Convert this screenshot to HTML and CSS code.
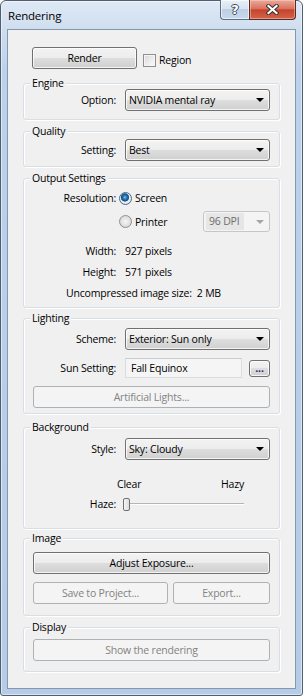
FILE: index.html
```html
<!DOCTYPE html>
<html lang="en">
<head>
  <meta charset="UTF-8" />
  <title>Rendering</title>
  <link rel="stylesheet" href="styles.css">
</head>
<body>
  <div class="window">
    <div class="titlebar">
      <span class="title">Rendering</span>
      <div class="caption">
        <span class="cap-btn cap-help">?</span>
        <span class="cap-btn cap-close">
          <svg width="13" height="11" viewBox="0 0 13 11">
            <path d="M2.5 2 L10.5 9 M10.5 2 L2.5 9" stroke="#3a3030" stroke-width="4.2" stroke-linecap="square" fill="none"/>
            <path d="M2.5 2 L10.5 9 M10.5 2 L2.5 9" stroke="#ffffff" stroke-width="2.2" stroke-linecap="square" fill="none"/>
          </svg>
        </span>
      </div>
    </div>

    <div class="client">
      <div class="render-row">
        <button class="btn btn-render">Render</button>
        <label class="check"><span class="checkbox"></span>Region</label>
      </div>

      <fieldset class="group group-engine">
        <legend>Engine</legend>
        <div class="row">
          <span class="lbl">Option:</span>
          <div class="combo">NVIDIA mental ray<span class="arrow"></span></div>
        </div>
      </fieldset>

      <fieldset class="group group-quality">
        <legend>Quality</legend>
        <div class="row">
          <span class="lbl">Setting:</span>
          <div class="combo">Best<span class="arrow"></span></div>
        </div>
      </fieldset>

      <fieldset class="group group-output">
        <legend>Output Settings</legend>
        <div class="row row-res">
          <span class="lbl">Resolution:</span>
          <span class="radio radio-on"></span>
          <span class="radio-text">Screen</span>
        </div>
        <div class="row row-printer">
          <span class="lbl"></span>
          <span class="radio"></span>
          <span class="radio-text">Printer</span>
          <div class="combo combo-disabled"><span class="sel-text">96 DPI</span><span class="arrow"></span></div>
        </div>
        <div class="info">
          <div class="row info-row"><span class="lbl">Width:</span><span class="val">927 pixels</span></div>
          <div class="row info-row"><span class="lbl">Height:</span><span class="val">571 pixels</span></div>
          <div class="row info-row info-size">Uncompressed image size:<span class="size-val">2 MB</span></div>
        </div>
      </fieldset>

      <fieldset class="group group-lighting">
        <legend>Lighting</legend>
        <div class="row row-scheme">
          <span class="lbl">Scheme:</span>
          <div class="combo">Exterior: Sun only<span class="arrow"></span></div>
        </div>
        <div class="row row-sun">
          <span class="lbl">Sun Setting:</span>
          <div class="textbox">Fall Equinox</div>
          <button class="btn btn-dots">...</button>
        </div>
        <button class="btn btn-wide btn-artificial" disabled>Artificial Lights...</button>
      </fieldset>

      <fieldset class="group group-background">
        <legend>Background</legend>
        <div class="row row-style">
          <span class="lbl">Style:</span>
          <div class="combo">Sky: Cloudy<span class="arrow"></span></div>
        </div>
        <div class="row row-ends">
          <span class="lbl"></span>
          <div class="ends"><span>Clear</span><span>Hazy</span></div>
        </div>
        <div class="row row-haze">
          <span class="lbl">Haze:</span>
          <div class="slider"><span class="thumb"></span></div>
        </div>
      </fieldset>

      <fieldset class="group group-image">
        <legend>Image</legend>
        <button class="btn btn-wide btn-adjust">Adjust Exposure...</button>
        <div class="btn-pair">
          <button class="btn btn-save" disabled>Save to Project...</button>
          <button class="btn btn-export" disabled>Export...</button>
        </div>
      </fieldset>

      <fieldset class="group group-display">
        <legend>Display</legend>
        <button class="btn btn-wide btn-show" disabled>Show the rendering</button>
      </fieldset>
    </div>
  </div>
</body>
</html>
```

FILE: styles.css
```css
html, body {
  margin: 0;
  padding: 0;
  background: #ffffff;
}

body {
  font-family: "Segoe UI", "Open Sans", sans-serif;
  font-size: 10.5px;
  letter-spacing: -0.2px;
  color: #000;
}

.window {
  box-sizing: border-box;
  width: 303px;
  height: 696px;
  border: 1px solid #4f5e70;
  border-radius: 6px 6px 3px 3px;
  background: linear-gradient(to bottom, #dfe9f5 0, #cfdeef 28px, #bcd1ea 70px, #b5cbe6 100%);
  box-shadow: inset 0 0 0 1px rgba(255, 255, 255, 0.5);
  display: flex;
  flex-direction: column;
}

/* title bar */
.titlebar {
  height: 28px;
  flex-shrink: 0;
  display: flex;
  justify-content: space-between;
  align-items: flex-start;
  padding: 0 6px 0 7px;
}

.title {
  line-height: 29px;
  font-size: 11.5px;
}

.caption {
  display: flex;
  margin-top: -1px;
}

.cap-btn {
  box-sizing: border-box;
  height: 20px;
  display: flex;
  align-items: center;
  justify-content: center;
  border: 1px solid #5d6c80;
  border-top: none;
}

.cap-help {
  width: 29px;
  border-right: none;
  border-radius: 0 0 0 4px;
  background: linear-gradient(to bottom, #e9f0f8 0, #d6e2ef 45%, #bccfe4 50%, #c9d9eb 100%);
  box-shadow: inset 0 0 0 1px rgba(255, 255, 255, 0.6);
  color: #fff;
  font-weight: bold;
  font-size: 13px;
  letter-spacing: 0;
  font-family: "DejaVu Sans", sans-serif;
  text-shadow: 1px 0 0 #3f4b5a, -1px 0 0 #3f4b5a, 0 1px 0 #3f4b5a, 0 -1px 0 #3f4b5a;
  padding-bottom: 1px;
}

.cap-close {
  width: 47px;
  border-color: #5a2a22;
  border-radius: 0 0 4px 0;
  background: linear-gradient(to bottom, #eaa99b 0, #d9735f 45%, #c5442b 52%, #d2654a 100%);
  box-shadow: inset 0 0 0 1px rgba(255, 220, 210, 0.45);
}

/* client area */
.client {
  flex: 1;
  margin: 0 6px 6px;
  border: 1px solid #8497ae;
  background: #f0f0f0;
  padding: 0 15px;
}

.render-row {
  display: flex;
  align-items: flex-start;
  margin: 17px 0 0 9px;
  height: 22px;
}

.check {
  display: flex;
  align-items: center;
  margin: 5px 0 0 6px;
  line-height: 16px;
}

.checkbox {
  box-sizing: border-box;
  width: 13px;
  height: 13px;
  border: 1px solid #8e8f8f;
  background: linear-gradient(135deg, #d8d8d8 0, #f2f2f2 70%, #fbfbfb 100%);
  box-shadow: inset 0 0 0 1px #f4f4f4;
  margin-right: 3px;
}

/* buttons */
.btn {
  box-sizing: border-box;
  height: 22px;
  padding: 0;
  border: 1px solid #707070;
  border-radius: 3px;
  background: linear-gradient(to bottom, #f3f3f3 0, #ececec 50%, #dedede 50%, #d0d0d0 100%);
  box-shadow: inset 0 0 0 1px rgba(255, 255, 255, 0.75);
  font: inherit;
  letter-spacing: inherit;
  color: #000;
}

.btn:disabled {
  border-color: #adb2b5;
  background: #f4f4f4;
  box-shadow: none;
  color: #838383;
}

.btn-render {
  width: 105px;
}

.btn-wide {
  display: block;
  width: 100%;
}

/* group boxes */
.group {
  margin: 0;
  padding: 0 9px;
  border: 1px solid #d5dfe5;
  border-radius: 3px;
  box-shadow: inset 1px 1px 0 #fff, 1px 1px 0 #fff;
}

.group legend {
  line-height: 11px;
  padding: 0 2px;
  margin-left: -3px;
  background: #f0f0f0;
}

.group-engine { margin-top: 9px; padding-bottom: 8px; }
.group-quality { margin-top: 6px; padding-bottom: 5px; }
.group-quality .row { margin-top: 2px; }
.group-output { margin-top: 6px; padding-bottom: 4px; }
.group-lighting { margin-top: 5px; padding-bottom: 5px; }
.group-background { margin-top: 8px; padding-bottom: 16px; }
.group-image { margin-top: 4px; padding-bottom: 11px; }
.group-display { margin-top: 6px; padding-bottom: 10px; }

.row {
  display: flex;
  align-items: center;
}

.lbl {
  width: 83px;
  flex-shrink: 0;
  text-align: right;
}

/* combo boxes */
.combo {
  box-sizing: border-box;
  width: 145px;
  height: 22px;
  margin-left: 9px;
  padding-left: 3px;
  display: flex;
  align-items: center;
  justify-content: space-between;
  border: 1px solid #707070;
  border-radius: 3px;
  background: linear-gradient(to bottom, #f3f3f3 0, #ececec 50%, #dedede 50%, #d0d0d0 100%);
  box-shadow: inset 0 0 0 1px rgba(255, 255, 255, 0.75);
}

.arrow {
  width: 0;
  height: 0;
  margin-right: 5px;
  border-left: 4px solid transparent;
  border-right: 4px solid transparent;
  border-top: 4px solid #000;
}

.combo-disabled {
  width: 67px;
  height: 21px;
  margin-left: auto;
  padding-left: 2px;
  border-color: #c4c7c9;
  background: #f4f4f4;
  box-shadow: none;
  color: #6d6d6d;
}

.combo-disabled .sel-text {
  background: #e6e6e6;
  padding: 1px 5px 1px 3px;
  line-height: 15px;
}

.combo-disabled .arrow {
  border-top-color: #a6a6a6;
}

/* output settings */
.radio {
  box-sizing: border-box;
  width: 13px;
  height: 13px;
  margin-left: 3px;
  border-radius: 50%;
  border: 1px solid #8e8f8f;
  background: radial-gradient(circle at 50% 50%, #f6f6f6 0, #e4e4e4 45%, #cfcfcf 100%);
}

.radio-on {
  border-color: #3c6d94;
  background: radial-gradient(circle at 45% 40%, #8fd0f7 0, #2c85c8 1.5px, #164f82 3.5px, #5f7d96 4px, #f0f0f0 4.5px, #d9d9d9 100%);
}

.radio-text {
  margin-left: 3px;
}

.row-res { margin-top: 4px; height: 20px; }
.row-printer { margin-top: 3px; height: 21px; }

.info { margin-top: 8px; }
.info-row { height: 21px; }
.val { margin-left: 9px; }
.info-size { padding-left: 33px; }
.size-val { margin-left: 5px; }

/* lighting */
.row-scheme { margin-top: 4px; }
.row-sun { margin-top: 8px; height: 20px; }

.textbox {
  box-sizing: border-box;
  width: 117px;
  height: 20px;
  margin-left: 9px;
  padding-left: 5px;
  line-height: 18px;
  border: 1px solid #d9dde2;
  border-top-color: #c9ccd1;
  background: #f5f5f5;
}

.btn-dots {
  width: 21px;
  height: 17px;
  margin-left: 7px;
  line-height: 12px;
  font-weight: bold;
  color: #1d1d6b;
}

.btn-artificial { margin-top: 8px; }

/* background */
.row-style { margin-top: 5px; }
.row-ends { margin-top: 16px; height: 16px; }
.row-haze { margin-top: 4px; height: 16px; }

.ends {
  width: 127px;
  margin-left: 1px;
  display: flex;
  justify-content: space-between;
}

.slider {
  width: 121px;
  height: 16px;
  margin-left: 7px;
  display: flex;
  align-items: center;
  background: linear-gradient(to bottom, transparent 7px, #b5b5b5 7px, #b5b5b5 8px, #ffffff 8px, #ffffff 9px, transparent 9px) 2px 0 / calc(100% - 2px) 100% no-repeat;
}

.thumb {
  box-sizing: border-box;
  width: 7px;
  height: 13px;
  border: 1px solid #707070;
  border-radius: 2px;
  background: linear-gradient(to right, #f6f6f6, #dcdcdc);
}

/* image / display */
.btn-adjust { margin-top: 8px; }

.btn-pair {
  display: flex;
  gap: 5px;
  margin-top: 8px;
}

.btn-save { width: 135px; }
.btn-export { flex: 1; }

.btn-show { margin-top: 6px; }
```
